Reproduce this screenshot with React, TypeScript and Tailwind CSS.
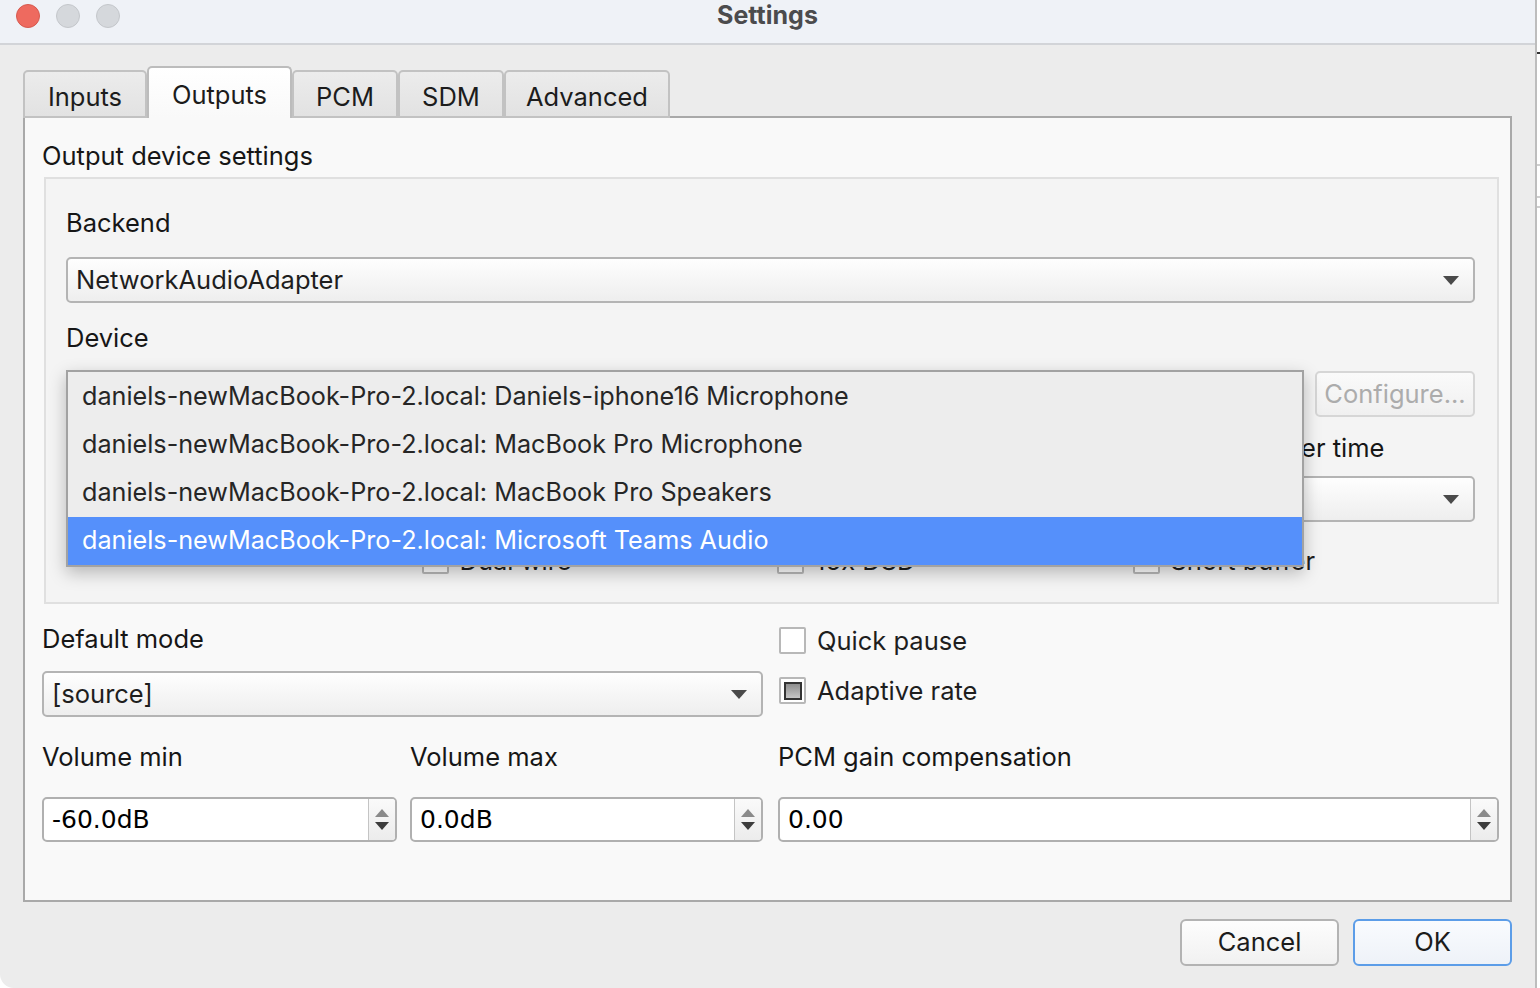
import React from "react";

const txt = "text-[25.5px] leading-[30px] text-[#161616]";

function Arrow() {
  return (
    <svg width="16" height="9" viewBox="0 0 16 9">
      <path d="M0 0 L16 0 L8 9 Z" fill="#4a4a4a" />
    </svg>
  );
}

function Combo({ text, className = "" }: { text?: string; className?: string }) {
  return (
    <div
      className={
        "h-[46px] flex items-center justify-between rounded-[5px] border-2 border-[#b4b4b4] bg-gradient-to-b from-[#fefefe] to-[#eeeeee] pl-[8px] pr-[14px] " +
        className
      }
    >
      <span className="text-[25.5px] text-[#1e1e1e] leading-none">{text}</span>
      <Arrow />
    </div>
  );
}

function Spin({ value, className = "" }: { value: string; className?: string }) {
  return (
    <div className={"h-[45px] flex rounded-[5px] border-2 border-[#b0b0b0] bg-white overflow-hidden " + className}>
      <div className="flex-1 flex items-center pl-[8px] text-[25px] text-black font-['DejaVu_Sans',sans-serif] leading-none">
        {value}
      </div>
      <div className="w-[27px] border-l border-[#c4c4c4] bg-gradient-to-b from-[#fafafa] to-[#ececec] flex flex-col items-center justify-center gap-[5px]">
        <svg width="14" height="8" viewBox="0 0 14 8">
          <path d="M0 8 L14 8 L7 0 Z" fill="#8a8a8a" />
        </svg>
        <svg width="14" height="8" viewBox="0 0 14 8">
          <path d="M0 0 L14 0 L7 8 Z" fill="#3c3c3c" />
        </svg>
      </div>
    </div>
  );
}

function Check({ label, partial = false }: { label: string; partial?: boolean }) {
  return (
    <div className="flex items-center gap-[11px]">
      <div className="w-[27px] h-[27px] border-2 border-[#b8b8b8] bg-white flex items-center justify-center rounded-[2px]">
        {partial ? (
          <div className="w-[18px] h-[18px] border-2 border-[#333] bg-gradient-to-b from-[#8e8e8e] to-[#c6c6c6]" />
        ) : null}
      </div>
      <span className="text-[25.5px] text-[#1e1e1e] leading-none">{label}</span>
    </div>
  );
}

export default function App() {
  const devices = [
    "daniels-newMacBook-Pro-2.local: Daniels-iphone16 Microphone",
    "daniels-newMacBook-Pro-2.local: MacBook Pro Microphone",
    "daniels-newMacBook-Pro-2.local: MacBook Pro Speakers",
    "daniels-newMacBook-Pro-2.local: Microsoft Teams Audio",
  ];
  const tabs = ["Inputs", "Outputs", "PCM", "SDM", "Advanced"];
  const tabWidths = ["w-[124px]", "w-[145px]", "w-[106px]", "w-[106px]", "w-[166px]"];

  return (
    <div className="w-[1540px] h-[988px] flex bg-white overflow-hidden font-['Inter',sans-serif]">
      <div className="relative w-[1537px] h-[988px] shrink-0 flex flex-col bg-[#ececec] border-r-2 border-[#bdbdbd] rounded-bl-[14px] overflow-hidden">
        {/* title bar */}
        <div className="h-[45px] shrink-0 relative flex items-center justify-center bg-[#eff2f7] border-b-2 border-[#d2d4d8]">
          <div className="absolute left-[16px] top-[4px] flex gap-[16px]">
            <div className="w-[24px] h-[24px] rounded-full bg-[#ee6a5f] border border-[#d65a4f]" />
            <div className="w-[24px] h-[24px] rounded-full bg-[#d5d8dc] border border-[#c4c7cb]" />
            <div className="w-[24px] h-[24px] rounded-full bg-[#d5d8dc] border border-[#c4c7cb]" />
          </div>
          <span className="-mt-[12px] text-[25px] font-bold text-[#4b4b4d]">Settings</span>
        </div>

        <div className="flex flex-col pl-[23px] pr-[23px] pt-[21px]">
          {/* tabs */}
          <div className="h-[52px] flex items-end -mb-[2px] relative z-10">
            {tabs.map((t, i) =>
              i === 1 ? (
                <div
                  key={t}
                  className={
                    tabWidths[i] +
                    " h-[52px] flex items-center justify-center pt-[4px] rounded-t-[5px] border-2 border-b-0 border-[#bcbcbc] bg-gradient-to-b from-white to-[#f9f9f9] text-[25.5px] text-[#1c1c1c]"
                  }
                >
                  {t}
                </div>
              ) : (
                <div
                  key={t}
                  className={
                    tabWidths[i] +
                    " h-[48px] flex items-center justify-center pt-[6px] rounded-t-[5px] border-2 border-[#c2c2c2] bg-gradient-to-b from-[#ececec] to-[#e2e2e2] text-[25.5px] text-[#1c1c1c]"
                  }
                >
                  {t}
                </div>
              )
            )}
          </div>

          {/* panel */}
          <div className="relative h-[786px] border-2 border-[#a9a9a9] bg-[#f9f9f9] pl-[17px] pr-[11px] pt-[23px]">
            <div className={txt}>Output device settings</div>

            <div className="mt-[6px] ml-[2px] h-[427px] border-2 border-[#e0e0e0] bg-[#f4f4f4] pl-[20px] pr-[22px] pt-[29px]">
              <div className={txt}>Backend</div>
              <Combo text="NetworkAudioAdapter" className="mt-[19px]" />
              <div className={"mt-[20px] " + txt}>Device</div>
              <div className="mt-[19px] flex gap-[12px]">
                <Combo className="flex-1" />
                <div className="w-[160px] h-[46px] -mt-[1px] rounded-[5px] border-2 border-[#d6d6d6] bg-gradient-to-b from-[#fafafa] to-[#f0f0f0] flex items-center justify-center text-[25.5px] text-[#acacac]">
                  Configure...
                </div>
              </div>
              <div className="mt-[15px] grid grid-cols-4 gap-x-[13px]">
                <div className={txt}>Sample rate</div>
                <div className={txt}>Bit depth</div>
                <div className={txt}>Channels</div>
                <div className={txt + " whitespace-nowrap"}>Preferred buffer time</div>
                <Combo className="mt-[13px]" />
                <Combo className="mt-[13px]" />
                <Combo className="mt-[13px]" />
                <Combo className="mt-[13px]" />
                <div className="mt-[25px]" />
                <div className="mt-[25px]">
                  <Check label="Dual wire" />
                </div>
                <div className="mt-[25px]">
                  <Check label="16x DSD" />
                </div>
                <div className="mt-[25px]">
                  <Check label="Short buffer" />
                </div>
              </div>
            </div>

            {/* lower settings */}
            <div className="mt-[20px] grid grid-cols-[721px_1fr] gap-x-[16px]">
              <div>
                <div className={txt}>Default mode</div>
                <Combo text="[source]" className="mt-[17px]" />
              </div>
              <div className="flex flex-col gap-[23px] pt-[3px]">
                <Check label="Quick pause" />
                <Check label="Adaptive rate" partial />
              </div>
            </div>

            <div className="mt-[25px] grid grid-cols-[355px_353px_1fr] gap-x-[13px]">
              <div className={txt}>Volume min</div>
              <div className={txt}>Volume max</div>
              <div className={txt + " pl-[2px]"}>PCM gain compensation</div>
              <Spin value="-60.0dB" className="mt-[25px]" />
              <Spin value="0.0dB" className="mt-[25px]" />
              <Spin value="0.00" className="mt-[25px] ml-[2px]" />
            </div>

            {/* open device popup */}
            <div className="absolute left-[41px] top-[252px] w-[1238px] h-[197px] border-2 border-[#a2a2a2] bg-[#ededed] shadow-[0_6px_16px_rgba(0,0,0,0.25)] pt-[1px]">
              {devices.map((d, i) => (
                <div
                  key={d}
                  className={
                    "h-[48px] flex items-center pl-[14px] text-[25.2px] " +
                    (i === 3 ? "bg-[#5590fb] text-white" : "text-[#262626]")
                  }
                >
                  {d}
                </div>
              ))}
            </div>
          </div>

          {/* buttons */}
          <div className="flex justify-end gap-[14px] pt-[17px]">
            <div className="w-[159px] h-[47px] rounded-[6px] border-2 border-[#b3b3b3] bg-gradient-to-b from-[#fdfdfd] to-[#f1f1f1] flex items-center justify-center text-[25.5px] text-[#1c1c1c]">
              Cancel
            </div>
            <div className="w-[159px] h-[47px] rounded-[6px] border-2 border-[#5c9de8] bg-gradient-to-b from-[#f9fbfe] to-[#eef2f8] flex items-center justify-center text-[25.5px] text-[#1c1c1c]">
              OK
            </div>
          </div>
        </div>
      </div>

      {/* background app sliver */}
      <div className="flex-1 flex flex-col bg-white">
        <div className="h-[52px]" />
        <div className="h-[2px] bg-[#333] w-[3px]" />
        <div className="h-[110px]" />
        <div className="h-[2px] bg-[#cfcfcf]" />
        <div className="h-[30px]" />
        <div className="h-[2px] bg-[#cfcfcf]" />
        <div className="h-[8px]" />
        <div className="h-[2px] bg-[#cfcfcf]" />
      </div>
    </div>
  );
}
